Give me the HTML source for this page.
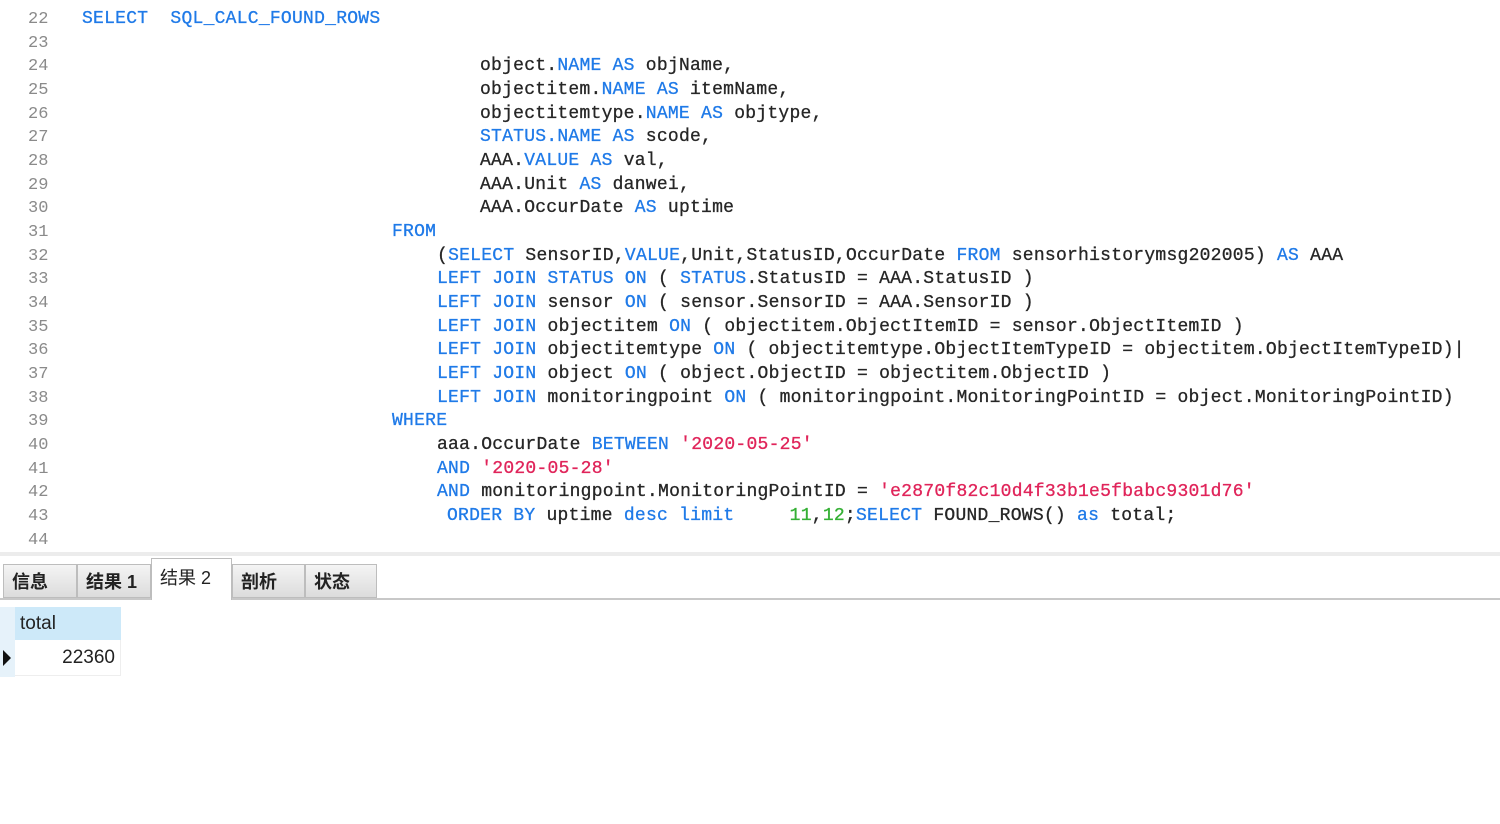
<!DOCTYPE html>
<html><head><meta charset="utf-8"><style>
body{margin:0;width:1500px;height:824px;background:#fff;overflow:hidden;position:relative;font-family:"Liberation Mono",monospace}
.ln{position:absolute;left:28px;font-size:17px;color:#8a8a8a;font-family:"Liberation Mono",monospace;margin-top:2px}
.c{position:absolute;font-size:18px;letter-spacing:0.25px;color:#262626;white-space:pre;font-family:"Liberation Mono",monospace;margin-top:2px;-webkit-text-stroke:0.3px}
.k{color:#1f7ae8}.s{color:#e0245a}.n{color:#35b035}
.tabs{position:absolute;left:0;top:558px;width:1500px;height:40px;border-bottom:2px solid #c8c8c8;background:#fff}
.tab{position:absolute;top:6px;height:34px;background:linear-gradient(#f4f4f4,#dcdcdc);border:1px solid #bdbdbd;font-family:"Liberation Sans","Noto Sans CJK SC",sans-serif;font-size:18px;line-height:34px;color:#222;padding-left:8px;box-sizing:border-box;font-weight:bold}
</style></head><body>
<div class="ln" style="top:8px">22</div><div class="c" style="left:82px;top:7px"><span class="k">SELECT  SQL_CALC_FOUND_ROWS</span></div>
<div class="ln" style="top:32px">23</div>
<div class="ln" style="top:55px">24</div><div class="c" style="left:480px;top:54px">object.<span class="k">NAME AS</span> objName,</div>
<div class="ln" style="top:79px">25</div><div class="c" style="left:480px;top:78px">objectitem.<span class="k">NAME AS</span> itemName,</div>
<div class="ln" style="top:103px">26</div><div class="c" style="left:480px;top:102px">objectitemtype.<span class="k">NAME AS</span> objtype,</div>
<div class="ln" style="top:126px">27</div><div class="c" style="left:480px;top:125px"><span class="k">STATUS.NAME AS</span> scode,</div>
<div class="ln" style="top:150px">28</div><div class="c" style="left:480px;top:149px">AAA.<span class="k">VALUE AS</span> val,</div>
<div class="ln" style="top:174px">29</div><div class="c" style="left:480px;top:173px">AAA.Unit <span class="k">AS</span> danwei,</div>
<div class="ln" style="top:197px">30</div><div class="c" style="left:480px;top:196px">AAA.OccurDate <span class="k">AS</span> uptime</div>
<div class="ln" style="top:221px">31</div><div class="c" style="left:392px;top:220px"><span class="k">FROM</span></div>
<div class="ln" style="top:245px">32</div><div class="c" style="left:437px;top:244px">(<span class="k">SELECT</span> SensorID,<span class="k">VALUE</span>,Unit,StatusID,OccurDate <span class="k">FROM</span> sensorhistorymsg202005) <span class="k">AS</span> AAA</div>
<div class="ln" style="top:268px">33</div><div class="c" style="left:437px;top:267px"><span class="k">LEFT JOIN STATUS ON</span> ( <span class="k">STATUS</span>.StatusID = AAA.StatusID )</div>
<div class="ln" style="top:292px">34</div><div class="c" style="left:437px;top:291px"><span class="k">LEFT JOIN</span> sensor <span class="k">ON</span> ( sensor.SensorID = AAA.SensorID )</div>
<div class="ln" style="top:316px">35</div><div class="c" style="left:437px;top:315px"><span class="k">LEFT JOIN</span> objectitem <span class="k">ON</span> ( objectitem.ObjectItemID = sensor.ObjectItemID )</div>
<div class="ln" style="top:339px">36</div><div class="c" style="left:437px;top:338px"><span class="k">LEFT JOIN</span> objectitemtype <span class="k">ON</span> ( objectitemtype.ObjectItemTypeID = objectitem.ObjectItemTypeID)|</div>
<div class="ln" style="top:363px">37</div><div class="c" style="left:437px;top:362px"><span class="k">LEFT JOIN</span> object <span class="k">ON</span> ( object.ObjectID = objectitem.ObjectID )</div>
<div class="ln" style="top:387px">38</div><div class="c" style="left:437px;top:386px"><span class="k">LEFT JOIN</span> monitoringpoint <span class="k">ON</span> ( monitoringpoint.MonitoringPointID = object.MonitoringPointID)</div>
<div class="ln" style="top:410px">39</div><div class="c" style="left:392px;top:409px"><span class="k">WHERE</span></div>
<div class="ln" style="top:434px">40</div><div class="c" style="left:437px;top:433px">aaa.OccurDate <span class="k">BETWEEN</span> <span class="s">'2020-05-25'</span></div>
<div class="ln" style="top:458px">41</div><div class="c" style="left:437px;top:457px"><span class="k">AND</span> <span class="s">'2020-05-28'</span></div>
<div class="ln" style="top:481px">42</div><div class="c" style="left:437px;top:480px"><span class="k">AND</span> monitoringpoint.MonitoringPointID = <span class="s">'e2870f82c10d4f33b1e5fbabc9301d76'</span></div>
<div class="ln" style="top:505px">43</div><div class="c" style="left:447px;top:504px"><span class="k">ORDER BY</span> uptime <span class="k">desc limit</span>     <span class="n">11</span>,<span class="n">12</span>;<span class="k">SELECT</span> FOUND_ROWS() <span class="k">as</span> total;</div>
<div class="ln" style="top:529px">44</div>
<div style="position:absolute;left:0;top:552px;width:1500px;height:4px;background:#ececec"></div>
<div class="tabs">
<div class="tab" style="left:3px;width:74px">信息</div>
<div class="tab" style="left:77px;width:74px">结果 1</div>
<div class="tab" style="left:151px;top:0;height:42px;width:81px;background:#fff;border-bottom:none;font-weight:normal;line-height:38px">结果 2</div>
<div class="tab" style="left:232px;width:73px">剖析</div>
<div class="tab" style="left:305px;width:72px">状态</div>
</div>
<div style="position:absolute;left:0;top:607px;width:15px;height:70px;background:#e6f2fa"></div>
<div style="position:absolute;left:15px;top:607px;width:106px;height:33px;background:#cde9f9;font-family:'Liberation Sans',sans-serif;font-size:19px;line-height:33px;color:#222;padding-left:5px;box-sizing:border-box">total</div>
<div style="position:absolute;left:15px;top:640px;width:106px;height:36px;font-family:'Liberation Sans',sans-serif;font-size:19px;line-height:36px;color:#222;text-align:right;padding-right:5px;box-sizing:border-box;border-right:1px solid #eee;border-bottom:1px solid #eee">22360</div>
<div style="position:absolute;left:3px;top:650px;width:0;height:0;border-left:8px solid #111;border-top:8px solid transparent;border-bottom:8px solid transparent"></div>
</body></html>
